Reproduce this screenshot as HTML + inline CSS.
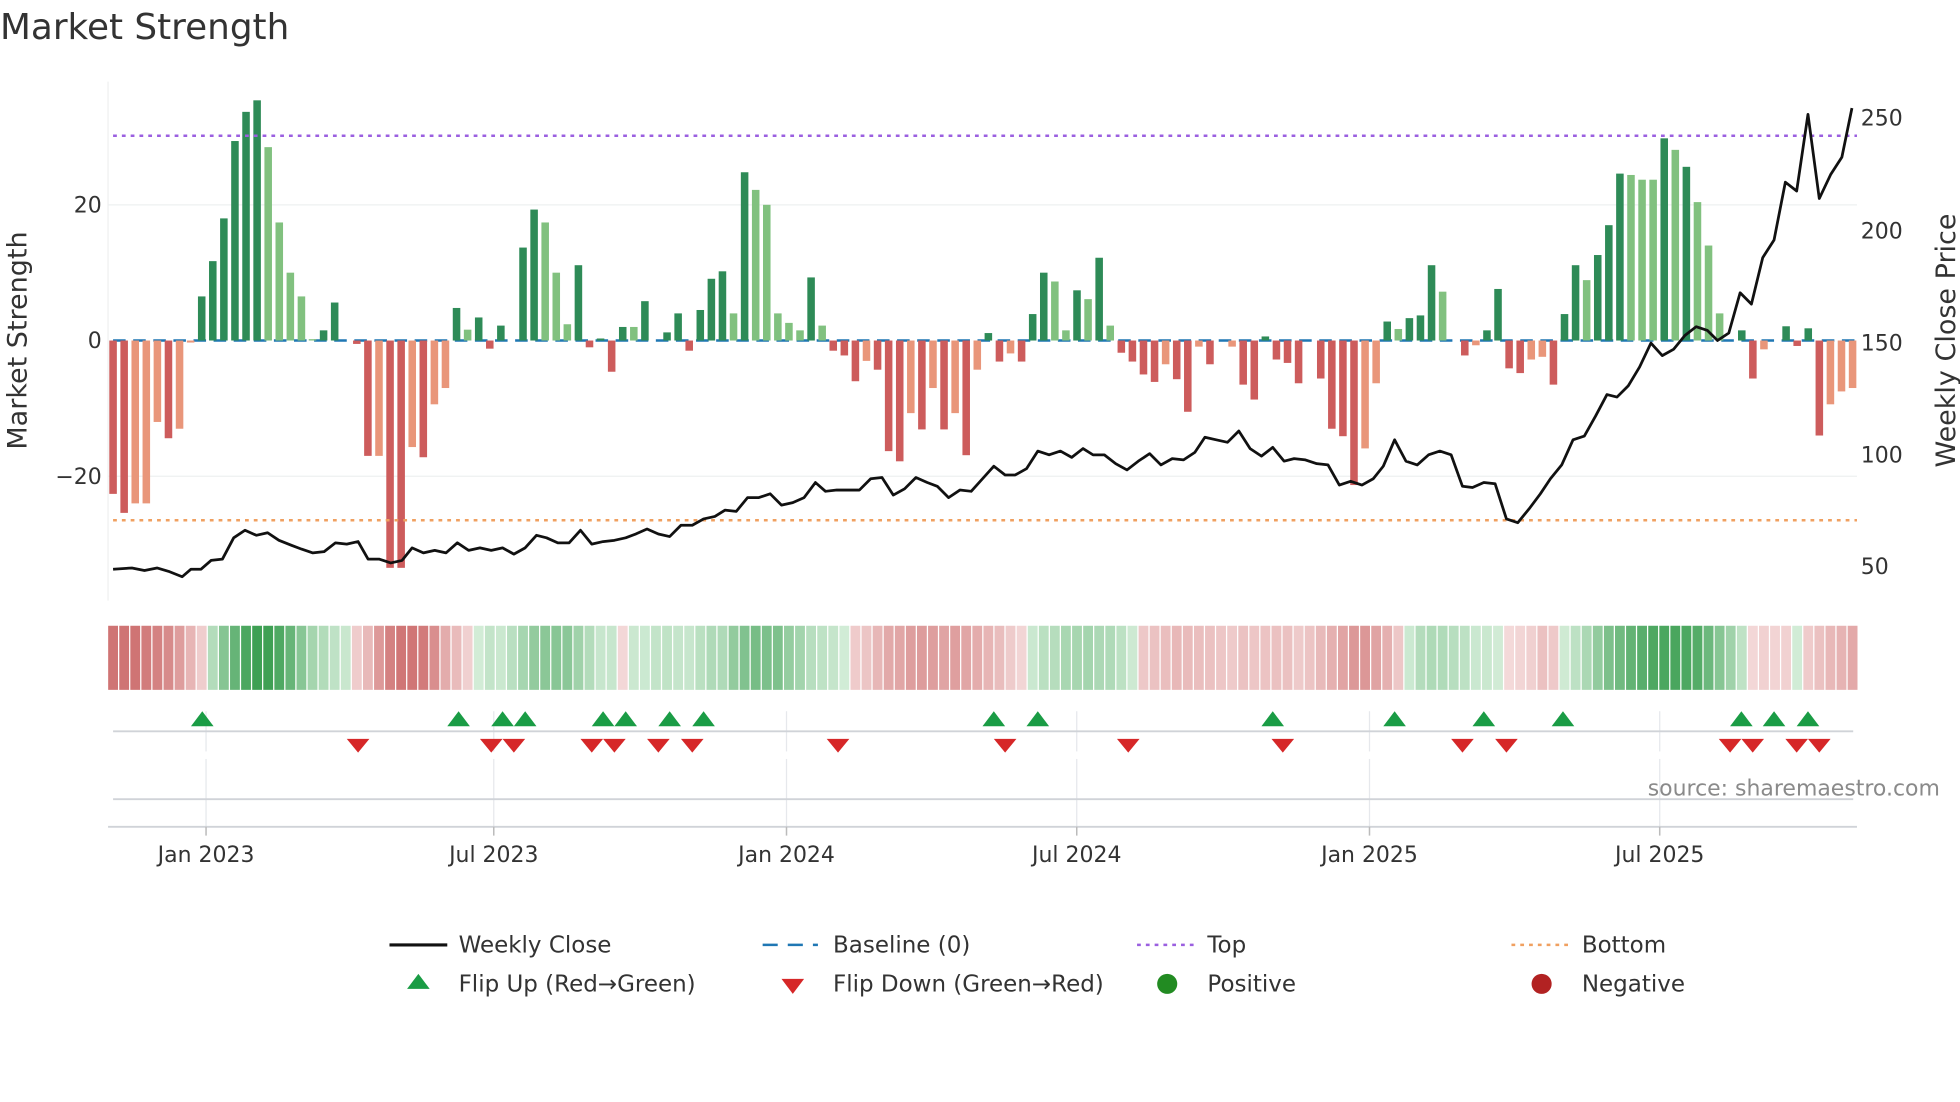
<!DOCTYPE html>
<html><head><meta charset="utf-8"><style>html,body{margin:0;padding:0;background:#fff;overflow:hidden}svg{display:block}</style></head>
<body>
<svg id="s" width="1960" height="1102" viewBox="0 0 1560 877" preserveAspectRatio="none" xmlns="http://www.w3.org/2000/svg" font-family="DejaVu Sans, Liberation Sans, sans-serif">
<rect width="1560" height="877" fill="#fff"/>
<text x="0" y="31" font-size="28.5" fill="#333">Market Strength</text>
<line x1="86" y1="163" x2="1478" y2="163" stroke="#eef0f0" stroke-width="1"/>
<line x1="86" y1="379" x2="1478" y2="379" stroke="#eef0f0" stroke-width="1"/>
<line x1="86" y1="65" x2="86" y2="478" stroke="#eef0f0" stroke-width="1"/>
<g font-size="17.5" fill="#333" text-anchor="end">
<text x="81" y="169">20</text><text x="81" y="277">0</text><text x="81" y="385">−20</text>
</g>
<g font-size="17.5" fill="#333">
<text x="1481" y="100">250</text><text x="1481" y="190">200</text><text x="1481" y="279">150</text><text x="1481" y="368">100</text><text x="1481" y="457">50</text>
</g>
<text transform="translate(21,271) rotate(-90)" font-size="21.5" fill="#333" text-anchor="middle">Market Strength</text>
<text transform="translate(1556,271) rotate(-90)" font-size="21.5" fill="#333" text-anchor="middle">Weekly Close Price</text>
<line x1="90" y1="271" x2="1478" y2="271" stroke="#1f77b4" stroke-width="2" stroke-dasharray="10,6"/>
<g id="bars"></g>
<line x1="90" y1="108" x2="1478" y2="108" stroke="#9b5fe0" stroke-width="2" stroke-dasharray="3,4"/>
<line x1="90" y1="414" x2="1478" y2="414" stroke="#f0a060" stroke-width="2" stroke-dasharray="3,4"/>
<polyline id="pl" fill="none" stroke="#111" stroke-width="2.2" stroke-linejoin="round"/>
<g id="strip"></g>
<g stroke="#e6e8ec" stroke-width="1">
<line x1="164" y1="566" x2="164" y2="598"/><line x1="393" y1="566" x2="393" y2="598"/><line x1="626" y1="566" x2="626" y2="598"/><line x1="857" y1="566" x2="857" y2="598"/><line x1="1090" y1="566" x2="1090" y2="598"/><line x1="1321" y1="566" x2="1321" y2="598"/>
<line x1="164" y1="604" x2="164" y2="658"/><line x1="393" y1="604" x2="393" y2="658"/><line x1="626" y1="604" x2="626" y2="658"/><line x1="857" y1="604" x2="857" y2="658"/><line x1="1090" y1="604" x2="1090" y2="658"/><line x1="1321" y1="604" x2="1321" y2="658"/>
</g>
<line x1="90" y1="582" x2="1475" y2="582" stroke="#d0d3d8" stroke-width="1.5"/>
<line x1="90" y1="636" x2="1475" y2="636" stroke="#d0d3d8" stroke-width="1.5"/>
<line x1="86" y1="658" x2="1478" y2="658" stroke="#d0d3d8" stroke-width="1.5"/>
<g stroke="#bbb" stroke-width="1.2">
<line x1="164" y1="658" x2="164" y2="665"/><line x1="393" y1="658" x2="393" y2="665"/><line x1="626" y1="658" x2="626" y2="665"/><line x1="857" y1="658" x2="857" y2="665"/><line x1="1090" y1="658" x2="1090" y2="665"/><line x1="1321" y1="658" x2="1321" y2="665"/>
</g>
<g id="mk"></g>
<text x="1544" y="633" font-size="17.5" fill="#8a8a8a" text-anchor="end">source: sharemaestro.com</text>
<g font-size="17.5" fill="#333" text-anchor="middle">
<text x="164" y="686">Jan 2023</text><text x="393" y="686">Jul 2023</text><text x="626" y="686">Jan 2024</text><text x="857" y="686">Jul 2024</text><text x="1090" y="686">Jan 2025</text><text x="1321" y="686">Jul 2025</text>
</g>
<g font-size="18.3" fill="#333">
<line x1="310" y1="752" x2="356" y2="752" stroke="#111" stroke-width="2.5"/><text x="365" y="758">Weekly Close</text>
<line x1="607" y1="752" x2="651" y2="752" stroke="#1f77b4" stroke-width="2" stroke-dasharray="12,8"/><text x="663" y="758">Baseline (0)</text>
<line x1="905" y1="752" x2="950" y2="752" stroke="#9b5fe0" stroke-width="2" stroke-dasharray="3,4"/><text x="961" y="758">Top</text>
<line x1="1203" y1="752" x2="1248" y2="752" stroke="#f0a060" stroke-width="2" stroke-dasharray="3,4"/><text x="1259" y="758">Bottom</text>
<polygon points="324,787 342,787 333,775" fill="#1a9c45"/><text x="365" y="789">Flip Up (Red→Green)</text>
<polygon points="622,779 640,779 631,791" fill="#d62728"/><text x="663" y="789">Flip Down (Green→Red)</text>
<circle cx="929" cy="783" r="8" fill="#228b22"/><text x="961" y="789">Positive</text>
<circle cx="1227" cy="783" r="8" fill="#b22222"/><text x="1259" y="789">Negative</text>
</g>
</svg>
<script>
var NS="http://www.w3.org/2000/svg";
function el(t,a,p){var e=document.createElementNS(NS,t);for(var k in a)e.setAttribute(k,a[k]);p.appendChild(e);return e;}
var d="-22.6r -25.4r -24s -24s -12s -14.4r -13s -0.3s 6.5g 11.7g 18g 29.4g 33.7g 35.4g 28.5l 17.4l 10l 6.5l 0.2l 1.5g 5.6g 0g -0.5r -17r -17s -33.5r -33.5r -15.7s -17.2r -9.4s -7s 4.8g 1.6l 3.4g -1.2r 2.2g 0g 13.7g 19.3g 17.4l 10l 2.4l 11.1g -1r 0.3g -4.6r 2g 2l 5.8g 0g 1.2g 4g -1.5r 4.5g 9.1g 10.2g 4l 24.8g 22.2l 20l 4l 2.6l 1.5l 9.3g 2.2l -1.5r -2.2r -6r -3s -4.3r -16.3r -17.8r -10.7s -13.1r -7s -13.1r -10.7s -16.9r -4.3s 1.1g -3.1r -1.9s -3.1r 3.9g 10g 8.7l 1.5l 7.4g 6.1l 12.2g 2.2l -1.8r -3.1r -5r -6.1r -3.5s -5.7r -10.5r -0.9s -3.5r 0g -0.9s -6.5r -8.7r 0.6g -2.8r -3.3r -6.3r 0g -5.6r -13r -14.1r -21.3r -15.9s -6.3s 2.8g 1.7l 3.3g 3.7g 11.1g 7.2l 0g -2.2r -0.7s 1.5g 7.6g -4.1r -4.8r -2.8s -2.4s -6.5r 3.9g 11.1g 8.9l 12.6g 17g 24.6g 24.4l 23.7l 23.7l 29.8g 28.1l 25.6g 20.4l 14l 4l 0g 1.5g -5.6r -1.3s 0g 2.1g -0.8r 1.8g -14r -9.4s -7.5s -7s".split(" ");
var n=d.length,x0=90,x1=1474.5,sp=(x1-x0)/(n-1),U=5.4;
var col={g:"#2e8b57",l:"#81c17f",r:"#cd5c5c",s:"#e9967a"};
var B=document.getElementById("bars"),S=document.getElementById("strip");
var vals=[];
for(var i=0;i<n;i++){var v=parseFloat(d[i]),t=d[i].slice(-1);vals.push(v);var x=x0+i*sp;
 if(Math.abs(v)>0.05){var h=Math.abs(v)*U;el("rect",{x:x-3,y:v>0?271-h:271,width:6,height:h,fill:col[t]},B);}}
for(var i=0;i<n;i++){var s=0,c=0;for(var j=i-3;j<=i+1;j++)if(j>=0&&j<n){s+=vals[j];c++;}s/=c;
 var a=Math.min(1,Math.pow(Math.abs(s)/30,0.8)),f;
 if(s>=0){f="rgb("+Math.round(214-(214-58)*a)+","+Math.round(238-(238-158)*a)+","+Math.round(218-(218-80)*a)+")";}
 else{f="rgb("+Math.round(244-(244-200)*a)+","+Math.round(218-(218-96)*a)+","+Math.round(218-(218-96)*a)+")";}
 var x=x0+i*sp;el("rect",{x:x-sp/2+0.5,y:498,width:sp-1,height:51,fill:f},S);}
var P=[[90,453],[105,452],[115,454],[125,452],[135,455],[145,459],[152,453],[160,453],[168,446],[177,445],[186,428],[195,422],[204,426],[213,424],[222,430],[232,434],[240,437],[249,440],[258,439],[267,432],[276,433],[285,431],[293,445],[302,445],[311,448],[320,446],[328,436],[337,440],[346,438],[355,440],[364,432],[373,438],[382,436],[391,438],[400,436],[409,441],[418,436],[427,426],[435,428],[444,432],[453,432],[462,422],[471,433],[480,431],[489,430],[498,428],[506,425],[515,421],[524,425],[533,427],[542,418],[551,418],[560,413],[569,411],[577,406],[586,407],[595,396],[604,396],[613,393],[622,402],[631,400],[640,396],[649,384],[657,391],[666,390],[675,390],[684,390],[693,381],[702,380],[711,394],[720,389],[729,380],[738,384],[746,387],[755,396],[764,390],[773,391],[782,381],[791,371],[800,378],[808,378],[817,373],[826,359],[835,362],[844,359],[853,364],[862,357],[870,362],[879,362],[888,369],[897,374],[906,367],[915,361],[924,370],[933,365],[942,366],[951,360],[959,348],[968,350],[977,352],[986,343],[995,357],[1004,363],[1013,356],[1022,367],[1030,365],[1039,366],[1048,369],[1057,370],[1066,386],[1075,383],[1084,386],[1093,381],[1101,371],[1110,350],[1119,367],[1128,370],[1137,362],[1146,359],[1155,362],[1164,387],[1172,388],[1181,384],[1190,385],[1199,413],[1208,416],[1217,405],[1226,393],[1234,381],[1243,370],[1252,350],[1261,347],[1270,331],[1279,314],[1287,316],[1296,307],[1305,292],[1314,273],[1323,283],[1332,278],[1341,267],[1350,260],[1359,263],[1367,271],[1376,265],[1385,233],[1394,242],[1403,205],[1412,191],[1421,145],[1430,152],[1439,91],[1448,158],[1457,139],[1466,125],[1474,86]];
document.getElementById("pl").setAttribute("points",P.map(function(p){return p.join(",")}).join(" "));
var M=document.getElementById("mk");
[161,365,400,418,480,498,533,560,791,826,1013,1110,1181,1244,1386,1412,1439].forEach(function(x){el("polygon",{points:(x-9)+",578 "+(x+9)+",578 "+x+",566",fill:"#1a9c45"},M);});
[285,391,409,471,489,524,551,667,800,898,1021,1164,1199,1377,1395,1430,1448].forEach(function(x){el("polygon",{points:(x-9)+",588 "+(x+9)+",588 "+x+",599",fill:"#d62728"},M);});
</script>
</body></html>
